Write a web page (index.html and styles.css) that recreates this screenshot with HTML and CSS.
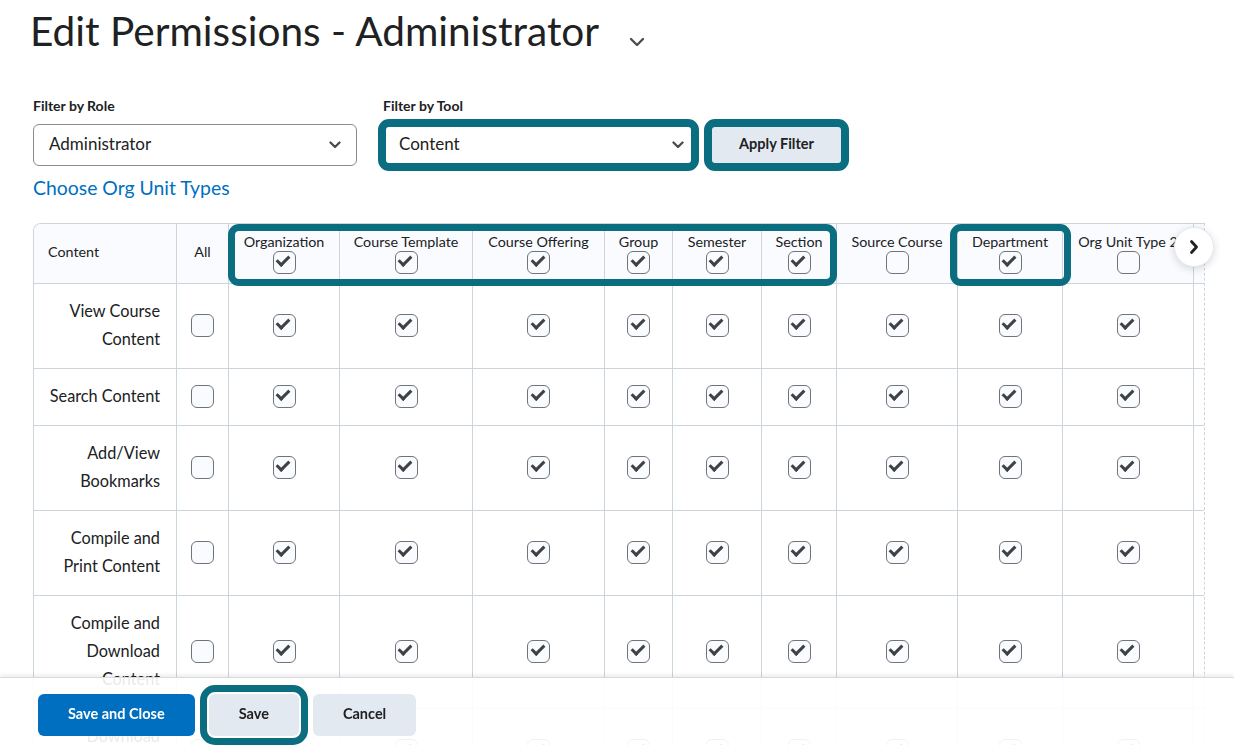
FILE: index.html
```html
<!DOCTYPE html>
<html lang="en">

<head>
    <meta charset="utf-8">
    <meta name="viewport" content="width=device-width, initial-scale=1.0">
    <title>Edit Permissions - Administrator</title>
    <link rel="stylesheet" href="styles.css">
</head>

<body>
    <main class="page">
        <header class="page-head">
            <h1>Edit Permissions - Administrator</h1>
            <button type="button" class="head-menu" aria-label="Role options">
                <svg width="16" height="10" viewBox="0 0 16 10"><polyline points="2,2 8,8 14,2" /></svg>
            </button>
        </header>

        <div class="filters">
            <div class="field">
                <div class="field-label">Filter by Role</div>
                <div class="select select-role">
                    <span>Administrator</span>
                    <svg width="12" height="8" viewBox="0 0 12 8"><polyline points="1.5,1.5 6,6 10.5,1.5" /></svg>
                </div>
            </div>
            <div class="field">
                <div class="field-label">Filter by Tool</div>
                <div class="field-row">
                    <div class="select select-tool marked">
                        <span>Content</span>
                        <svg width="12" height="8" viewBox="0 0 12 8"><polyline points="1.5,1.5 6,6 10.5,1.5" /></svg>
                    </div>
                    <button type="button" class="btn marked">Apply Filter</button>
                </div>
            </div>
        </div>

        <a class="org-link" href="#">Choose Org Unit Types</a>

        <div class="grid">
            <div class="grid-scroll">
                <table class="perm-table">
                    <colgroup>
                        <col style="width:143px"><col style="width:52px"><col style="width:111px"><col style="width:133px">
                        <col style="width:132px"><col style="width:68px"><col style="width:89px"><col style="width:75px">
                        <col style="width:121px"><col style="width:105px"><col style="width:131px"><col style="width:140px">
                    </colgroup>
                    <thead>
                        <tr>
                            <th class="th-name">Content</th>
                            <th class="th-all">All</th>
                            <th><span class="th-label">Organization</span><input class="cb" type="checkbox" checked></th>
                            <th><span class="th-label">Course Template</span><input class="cb" type="checkbox" checked></th>
                            <th><span class="th-label">Course Offering</span><input class="cb" type="checkbox" checked></th>
                            <th><span class="th-label">Group</span><input class="cb" type="checkbox" checked></th>
                            <th><span class="th-label">Semester</span><input class="cb" type="checkbox" checked></th>
                            <th><span class="th-label">Section</span><input class="cb" type="checkbox" checked></th>
                            <th><span class="th-label">Source Course</span><input class="cb" type="checkbox"></th>
                            <th><span class="th-label">Department</span><input class="cb" type="checkbox" checked></th>
                            <th><span class="th-label">Org Unit Type 2</span><input class="cb" type="checkbox"></th>
                            <th><span class="th-label">&nbsp;</span><input class="cb" type="checkbox"></th>
                        </tr>
                    </thead>
                    <tbody>
                        <tr>
                            <td class="td-name">View Course Content</td>
                            <td><input class="cb" type="checkbox"></td>
                            <td><input class="cb" type="checkbox" checked></td><td><input class="cb" type="checkbox" checked></td>
                            <td><input class="cb" type="checkbox" checked></td><td><input class="cb" type="checkbox" checked></td>
                            <td><input class="cb" type="checkbox" checked></td><td><input class="cb" type="checkbox" checked></td>
                            <td><input class="cb" type="checkbox" checked></td><td><input class="cb" type="checkbox" checked></td>
                            <td><input class="cb" type="checkbox" checked></td><td><input class="cb" type="checkbox" checked></td>
                        </tr>
                        <tr>
                            <td class="td-name">Search Content</td>
                            <td><input class="cb" type="checkbox"></td>
                            <td><input class="cb" type="checkbox" checked></td><td><input class="cb" type="checkbox" checked></td>
                            <td><input class="cb" type="checkbox" checked></td><td><input class="cb" type="checkbox" checked></td>
                            <td><input class="cb" type="checkbox" checked></td><td><input class="cb" type="checkbox" checked></td>
                            <td><input class="cb" type="checkbox" checked></td><td><input class="cb" type="checkbox" checked></td>
                            <td><input class="cb" type="checkbox" checked></td><td><input class="cb" type="checkbox" checked></td>
                        </tr>
                        <tr>
                            <td class="td-name">Add/View Bookmarks</td>
                            <td><input class="cb" type="checkbox"></td>
                            <td><input class="cb" type="checkbox" checked></td><td><input class="cb" type="checkbox" checked></td>
                            <td><input class="cb" type="checkbox" checked></td><td><input class="cb" type="checkbox" checked></td>
                            <td><input class="cb" type="checkbox" checked></td><td><input class="cb" type="checkbox" checked></td>
                            <td><input class="cb" type="checkbox" checked></td><td><input class="cb" type="checkbox" checked></td>
                            <td><input class="cb" type="checkbox" checked></td><td><input class="cb" type="checkbox" checked></td>
                        </tr>
                        <tr>
                            <td class="td-name">Compile and Print Content</td>
                            <td><input class="cb" type="checkbox"></td>
                            <td><input class="cb" type="checkbox" checked></td><td><input class="cb" type="checkbox" checked></td>
                            <td><input class="cb" type="checkbox" checked></td><td><input class="cb" type="checkbox" checked></td>
                            <td><input class="cb" type="checkbox" checked></td><td><input class="cb" type="checkbox" checked></td>
                            <td><input class="cb" type="checkbox" checked></td><td><input class="cb" type="checkbox" checked></td>
                            <td><input class="cb" type="checkbox" checked></td><td><input class="cb" type="checkbox" checked></td>
                        </tr>
                        <tr>
                            <td class="td-name">Compile and Download Content</td>
                            <td><input class="cb" type="checkbox"></td>
                            <td><input class="cb" type="checkbox" checked></td><td><input class="cb" type="checkbox" checked></td>
                            <td><input class="cb" type="checkbox" checked></td><td><input class="cb" type="checkbox" checked></td>
                            <td><input class="cb" type="checkbox" checked></td><td><input class="cb" type="checkbox" checked></td>
                            <td><input class="cb" type="checkbox" checked></td><td><input class="cb" type="checkbox" checked></td>
                            <td><input class="cb" type="checkbox" checked></td><td><input class="cb" type="checkbox" checked></td>
                        </tr>
                        <tr>
                            <td class="td-name">Download Content</td>
                            <td><input class="cb" type="checkbox"></td>
                            <td><input class="cb" type="checkbox" checked></td><td><input class="cb" type="checkbox" checked></td>
                            <td><input class="cb" type="checkbox" checked></td><td><input class="cb" type="checkbox" checked></td>
                            <td><input class="cb" type="checkbox" checked></td><td><input class="cb" type="checkbox" checked></td>
                            <td><input class="cb" type="checkbox" checked></td><td><input class="cb" type="checkbox" checked></td>
                            <td><input class="cb" type="checkbox" checked></td><td><input class="cb" type="checkbox" checked></td>
                        </tr>
                    </tbody>
                </table>
            </div>

            <!-- marcacoes em volta das colunas alteradas -->
            <div class="mark-box mark-types"></div>
            <div class="mark-box mark-dept"></div>

            <button type="button" class="scroll-next" aria-label="Scroll right">
                <svg width="12" height="16" viewBox="0 0 12 16"><polyline points="3.5,2.5 8.5,8 3.5,13.5" /></svg>
            </button>
        </div>
    </main>

    <footer class="action-bar">
        <button type="button" class="btn btn-primary">Save and Close</button>
        <button type="button" class="btn marked-out">Save</button>
        <button type="button" class="btn">Cancel</button>
    </footer>
</body>

</html>
```

FILE: styles.css
```css
/* base da pagina */
body {
    margin: 0;
    background: #fff;
    color: #202122;
    font-family: Lato, "Noto Sans", Arial, sans-serif;
}

.page {
    padding: 6px 0 120px 33px;
}

/* titulo */
.page-head {
    display: flex;
    align-items: flex-start;
}

h1 {
    margin: 1px 0 0 -3px;
    font-size: 40.6px;
    font-weight: 400;
    line-height: 47px;
    color: #202122;
}

.head-menu {
    background: none;
    border: 0;
    padding: 0;
    margin: 29px 0 0 30px;
    cursor: pointer;
}

.head-menu svg polyline,
.select svg polyline {
    fill: none;
    stroke: #494c4e;
    stroke-width: 2.3;
    stroke-linecap: round;
    stroke-linejoin: round;
}

/* filtros */
.filters {
    display: flex;
    gap: 26px;
    margin-top: 42px;
}

.field-label {
    font-size: 14px;
    font-weight: 700;
    line-height: 20px;
    margin-bottom: 8px;
}

.field-row {
    display: flex;
    gap: 15px;
}

.select {
    box-sizing: border-box;
    height: 42px;
    display: flex;
    align-items: center;
    justify-content: space-between;
    padding: 0 15px 3px 15px;
    border: 1px solid #868c8f;
    border-radius: 6px;
    font-size: 17px;
    background: #fff;
}

.select svg {
    margin-top: 3px;
}

.select-role {
    width: 324px;
}

.select-tool {
    width: 311px;
    padding-right: 9px;
}

.btn {
    height: 42px;
    padding: 0 30px 3px;
    border: 0;
    border-radius: 6px;
    background: #e3e9f1;
    color: #202122;
    font-family: Lato, "Noto Sans", Arial, sans-serif;
    font-size: 14.5px;
    font-weight: 700;
    cursor: pointer;
}

.btn-primary {
    background: #006fbf;
    color: #fff;
}

/* destaques da captura */
.marked {
    outline: 8px solid #0b6e80;
    outline-offset: -3px;
}

.marked-out {
    outline: 7px solid #0b6e80;
    outline-offset: 2px;
}

.org-link {
    display: inline-block;
    margin-top: 9px;
    font-size: 19.4px;
    line-height: 26px;
    color: #006fbf;
    text-decoration: none;
}

/* tabela de permissoes */
.grid {
    position: relative;
    margin-top: 22px;
}

.grid-scroll {
    box-sizing: border-box;
    width: 1172px;
    overflow: hidden;
    border-top: 1px solid #cdd5dc;
    border-left: 1px solid #cdd5dc;
    border-right: 1px dashed #cdd5dc;
    border-top-left-radius: 8px;
}

.perm-table {
    table-layout: fixed;
    width: 1300px;
    border-collapse: separate;
    border-spacing: 0;
}

.perm-table th,
.perm-table td {
    box-sizing: border-box;
    border-right: 1px solid #cdd5dc;
    border-bottom: 1px solid #cdd5dc;
}

.perm-table th {
    background: #f9fbff;
    font-size: 14.3px;
    font-weight: 400;
    line-height: 18px;
    padding: 9px 2px;
    vertical-align: top;
    white-space: nowrap;
    overflow: hidden;
}

.perm-table th.th-name {
    text-align: left;
    padding: 7px 2px 11px 14px;
    vertical-align: middle;
}

.perm-table th.th-all {
    vertical-align: middle;
    padding: 7px 2px 11px;
}

.th-label {
    display: block;
}

.perm-table td {
    padding: 13px 8px 15px;
    font-size: 16.3px;
    line-height: 28px;
    text-align: center;
}

.perm-table td.td-name {
    text-align: right;
    padding: 13px 16px 15px 8px;
}

/* caixas de selecao */
.cb {
    -webkit-appearance: none;
    appearance: none;
    box-sizing: border-box;
    display: block;
    position: relative;
    width: 23px;
    height: 23px;
    margin: 0 auto;
    border: 1.6px solid #6e7477;
    border-radius: 6px;
    background: #f9fbff;
    cursor: pointer;
}

.cb:checked::after {
    content: "";
    position: absolute;
    left: 5.5px;
    top: 1px;
    width: 5px;
    height: 10px;
    border: solid #3f4244;
    border-width: 0 3px 3px 0;
    transform: rotate(45deg);
}

.mark-box {
    position: absolute;
    top: 1px;
    height: 62px;
    box-sizing: border-box;
    border: 7px solid #0b6e80;
    border-radius: 11px;
    pointer-events: none;
}

.mark-types {
    left: 195px;
    width: 609px;
}

.mark-dept {
    left: 917px;
    width: 121px;
}

.scroll-next {
    position: absolute;
    left: 1141px;
    top: 4px;
    width: 40px;
    height: 40px;
    padding: 0;
    display: flex;
    align-items: center;
    justify-content: center;
    border: 1px solid #e3e9f1;
    border-radius: 50%;
    background: #fff;
    box-shadow: 0 2px 8px rgba(0, 0, 0, 0.15);
    cursor: pointer;
}

.scroll-next svg polyline {
    fill: none;
    stroke: #202122;
    stroke-width: 2.8;
    stroke-linecap: round;
    stroke-linejoin: round;
}

/* barra de acoes fixa */
.action-bar {
    position: fixed;
    left: 0;
    right: 0;
    bottom: 0;
    height: 68px;
    box-sizing: border-box;
    display: flex;
    gap: 14px;
    padding: 16px 38px 0;
    background: rgba(255, 255, 255, 0.9);
    border-top: 1px solid #d7dce2;
    box-shadow: 0 -2px 4px rgba(0, 0, 0, 0.08);
}
```
